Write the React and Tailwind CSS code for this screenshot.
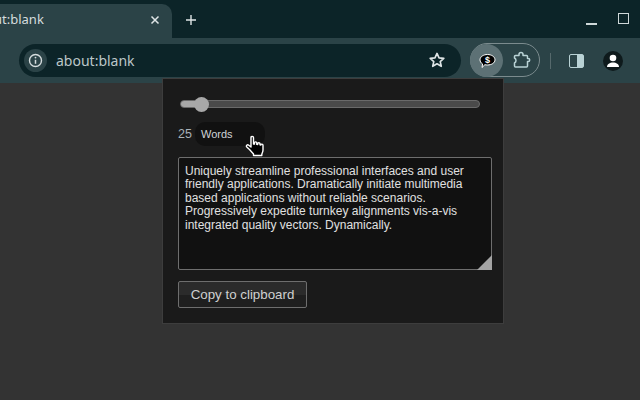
import React from "react";

const sans = "font-['Noto_Sans',sans-serif]";
const lib = "font-['Liberation_Sans',Arial,sans-serif]";

function Hand() {
  return (
    <svg className="absolute left-[245px] top-[135px]" width="20" height="22" viewBox="0 0 20 22">
      <path d="M6 2.500c0-1.500 2.500-1.500 2.500 0V9l1 .1V7.800c0-1.200 2.200-1.200 2.300 0V9.400l.9.100V8.600c0-1.200 2.200-1.200 2.300 0v1.200l.8.200c0-1.200 2.200-1.200 2.200.3v4.700c0 1.700-.8 2.900-1.200 4.200v1.300H8.500v-1.500L4.500 14.500 1.800 12c-1.100-1.200.5-2.800 1.900-1.800L6 12z" fill="#000" stroke="#fff" strokeWidth="1.400" strokeLinejoin="round" />
    </svg>
  );
}

export default function App() {
  return (
    <div className={`relative w-[640px] h-[400px] overflow-hidden bg-[#333333] flex flex-col ${lib}`}>
      {/* tab strip */}
      <div className="h-[38px] bg-[#0c2428] flex items-end shrink-0">
        <div className={`w-[172px] h-[34px] bg-[#2b4347] rounded-tr-[10px] flex items-center justify-between pr-[12px] overflow-hidden ${sans}`}>
          <span className="text-[13px] text-[#d5dcdd] -ml-[6px] pb-[3px]">ut:blank</span>
          <svg width="10" height="10" viewBox="0 0 10 10" className="mb-[3px]">
            <path d="M1.500 1.500l7 7M8.500 1.500l-7 7" stroke="#dfe5e6" strokeWidth="1.500" />
          </svg>
        </div>
        <div className="ml-[13px] h-[34px] flex items-center pb-[3px]">
          <svg width="12" height="12" viewBox="0 0 12 12">
            <path d="M6 1v10M1 6h10" stroke="#dfe5e6" strokeWidth="1.400" />
          </svg>
        </div>
        <div className="ml-auto h-[38px] flex items-center gap-[21px] pr-[11px]">
          <div className="w-[11px] h-[1.500px] bg-[#cfd8d9] mt-[10px]" />
          <div className="w-[11px] h-[11px] border-[1.500px] border-[#cfd8d9] mb-[1px]" />
        </div>
      </div>

      {/* toolbar */}
      <div className="h-[46px] bg-[#2b4347] flex items-center shrink-0 border-b border-[#333333]">
        <div className="ml-[19px] w-[442px] h-[33px] rounded-full bg-[#0c2428] flex items-center pl-[5px] mb-[1px]">
          <div className="w-[23px] h-[23px] rounded-full bg-[#2b4347] flex items-center justify-center">
            <svg width="15" height="15" viewBox="0 0 15 15" fill="none">
              <circle cx="7.500" cy="7.500" r="6" stroke="#d5dcdd" strokeWidth="1.400" />
              <path d="M7.500 6.800v4" stroke="#d5dcdd" strokeWidth="1.500" />
              <circle cx="7.500" cy="4.600" r="0.900" fill="#d5dcdd" />
            </svg>
          </div>
          <span className={`ml-[9px] text-[14px] text-[#bcc7c9] ${sans}`}>about:blank</span>
          <svg className="ml-auto mr-[15px]" width="18" height="18" viewBox="0 0 24 24" fill="none">
            <path d="M12 3.200l2.700 5.900 6.400.7-4.800 4.300 1.400 6.300L12 17.100l-5.700 3.300 1.400-6.300-4.800-4.300 6.400-.7z" stroke="#dfe5e6" strokeWidth="2.200" strokeLinejoin="round" />
          </svg>
        </div>
        <div className="ml-[9px] w-[70px] h-[34px] rounded-full border border-[#7b8b8e] flex items-center relative mb-[1px]">
          <div className="w-[33px] h-[33px] rounded-full bg-[#5d7175] flex items-center justify-center -ml-[1px]">
            <svg className="ml-[1px] mt-[2px]" width="17" height="16" viewBox="0 0 17 16">
              <path d="M8.500 1.500c4 0 7.500 2.200 7.500 5.300s-3.500 5.200-7.500 5.200c-1 0-1.800-.1-2.600-.3L3 14.500l.6-3.500C2 10 1 8.500 1 6.800 1 3.700 4.500 1.500 8.500 1.500z" fill="#000" stroke="#fff" strokeWidth="1" />
              <text x="8.500" y="10" textAnchor="middle" fontSize="9" fontWeight="700" fill="#fff" fontFamily="Liberation Sans">$</text>
            </svg>
          </div>
          <svg className="ml-[10px]" width="18" height="18" viewBox="0 0 18 18" fill="none">
            <path d="M2.500 4.500H6V3.500a2 2 0 0 1 4 0V4.500h3.500a1 1 0 0 1 1 1V7.500h.7a1.500 1.500 0 0 1 0 3H14.500v4.500a1 1 0 0 1-1 1h-11a1 1 0 0 1-1-1V12a2.800 2.800 0 0 0 1.500-2.500A2.800 2.800 0 0 0 1.500 7V5.500a1 1 0 0 1 1-1z" stroke="#b9d2d5" strokeWidth="1.500" strokeLinejoin="round" />
          </svg>
        </div>
        <div className="ml-[10px] w-px h-[16px] bg-[#56696c]" />
        <div className="ml-[18px] w-[15px] h-[14px] rounded-[2px] border-[1.500px] border-[#b9d2d5] flex justify-end">
          <div className="w-[6px] bg-[#b9d2d5]" />
        </div>
        <div className="ml-[19px] w-[20px] h-[20px] rounded-full bg-[#0e1a1c] flex items-center justify-center overflow-hidden">
          <svg width="16" height="16" viewBox="0 0 16 16">
            <circle cx="8" cy="5" r="3.300" fill="#fff" />
            <path d="M2 14c0-3 2.800-4.500 6-4.500s6 1.500 6 4.500z" fill="#fff" />
          </svg>
        </div>
      </div>

      {/* page */}
      <div className="flex-1 bg-[#333333]" />

      {/* popup */}
      <div className="absolute left-[162px] top-[78px] w-[342px] h-[246px] bg-[#1a1a1a] border border-[#3d3d3d] pl-[15px] pr-[10px] pt-[21px] flex flex-col">
        <div className="ml-[2px] w-[300px] h-[8px] rounded-full bg-[#4a4a4a] border border-[#6a6a6a] flex items-center">
          <div className="w-[14px] h-[6px] rounded-l-full bg-[#a8a8a8]" />
          <div className="w-[15px] h-[15px] rounded-full bg-[#a8a8a8] -ml-[1px]" />
        </div>
        <div className="mt-[13px] flex items-center h-[26px]">
          <span className="text-[12.500px] text-[#a9b1b8] w-[17px]">25</span>
          <div className="w-[70px] h-[24px] rounded-[10px] bg-[#111111] flex items-center pl-[6px] text-[11px] text-[#cfd3d6]">
            Words
          </div>
        </div>
        <div className="relative mt-[10px] w-[314px] h-[113px]">
          <textarea
            readOnly
            className="block w-full h-full resize-none bg-[#111111] border border-[#6e6e6e] rounded-[2px] px-[6px] pt-[6.500px] pb-[5px] text-[12px] leading-[13.600px] text-[#e0e0e0] outline-none overflow-hidden"
            value="Uniquely streamline professional interfaces and user friendly applications. Dramatically initiate multimedia based applications without reliable scenarios. Progressively expedite turnkey alignments vis-a-vis integrated quality vectors. Dynamically."
          />
          <div className="absolute right-[0px] bottom-[0px] w-[15px] h-[15px] bg-[#a3a3a3] [clip-path:polygon(100%_0,100%_100%,0_100%)]" />
        </div>
        <button className="mt-[11px] w-[129px] h-[27px] rounded-[2px] border border-[#6e6e6e] bg-[linear-gradient(#2b2b2b_50%,#1f1f1f_50%)] text-[13.330px] text-[#d0d0d0] flex items-center justify-center">
          Copy to clipboard
        </button>
      </div>
      <Hand />
    </div>
  );
}
